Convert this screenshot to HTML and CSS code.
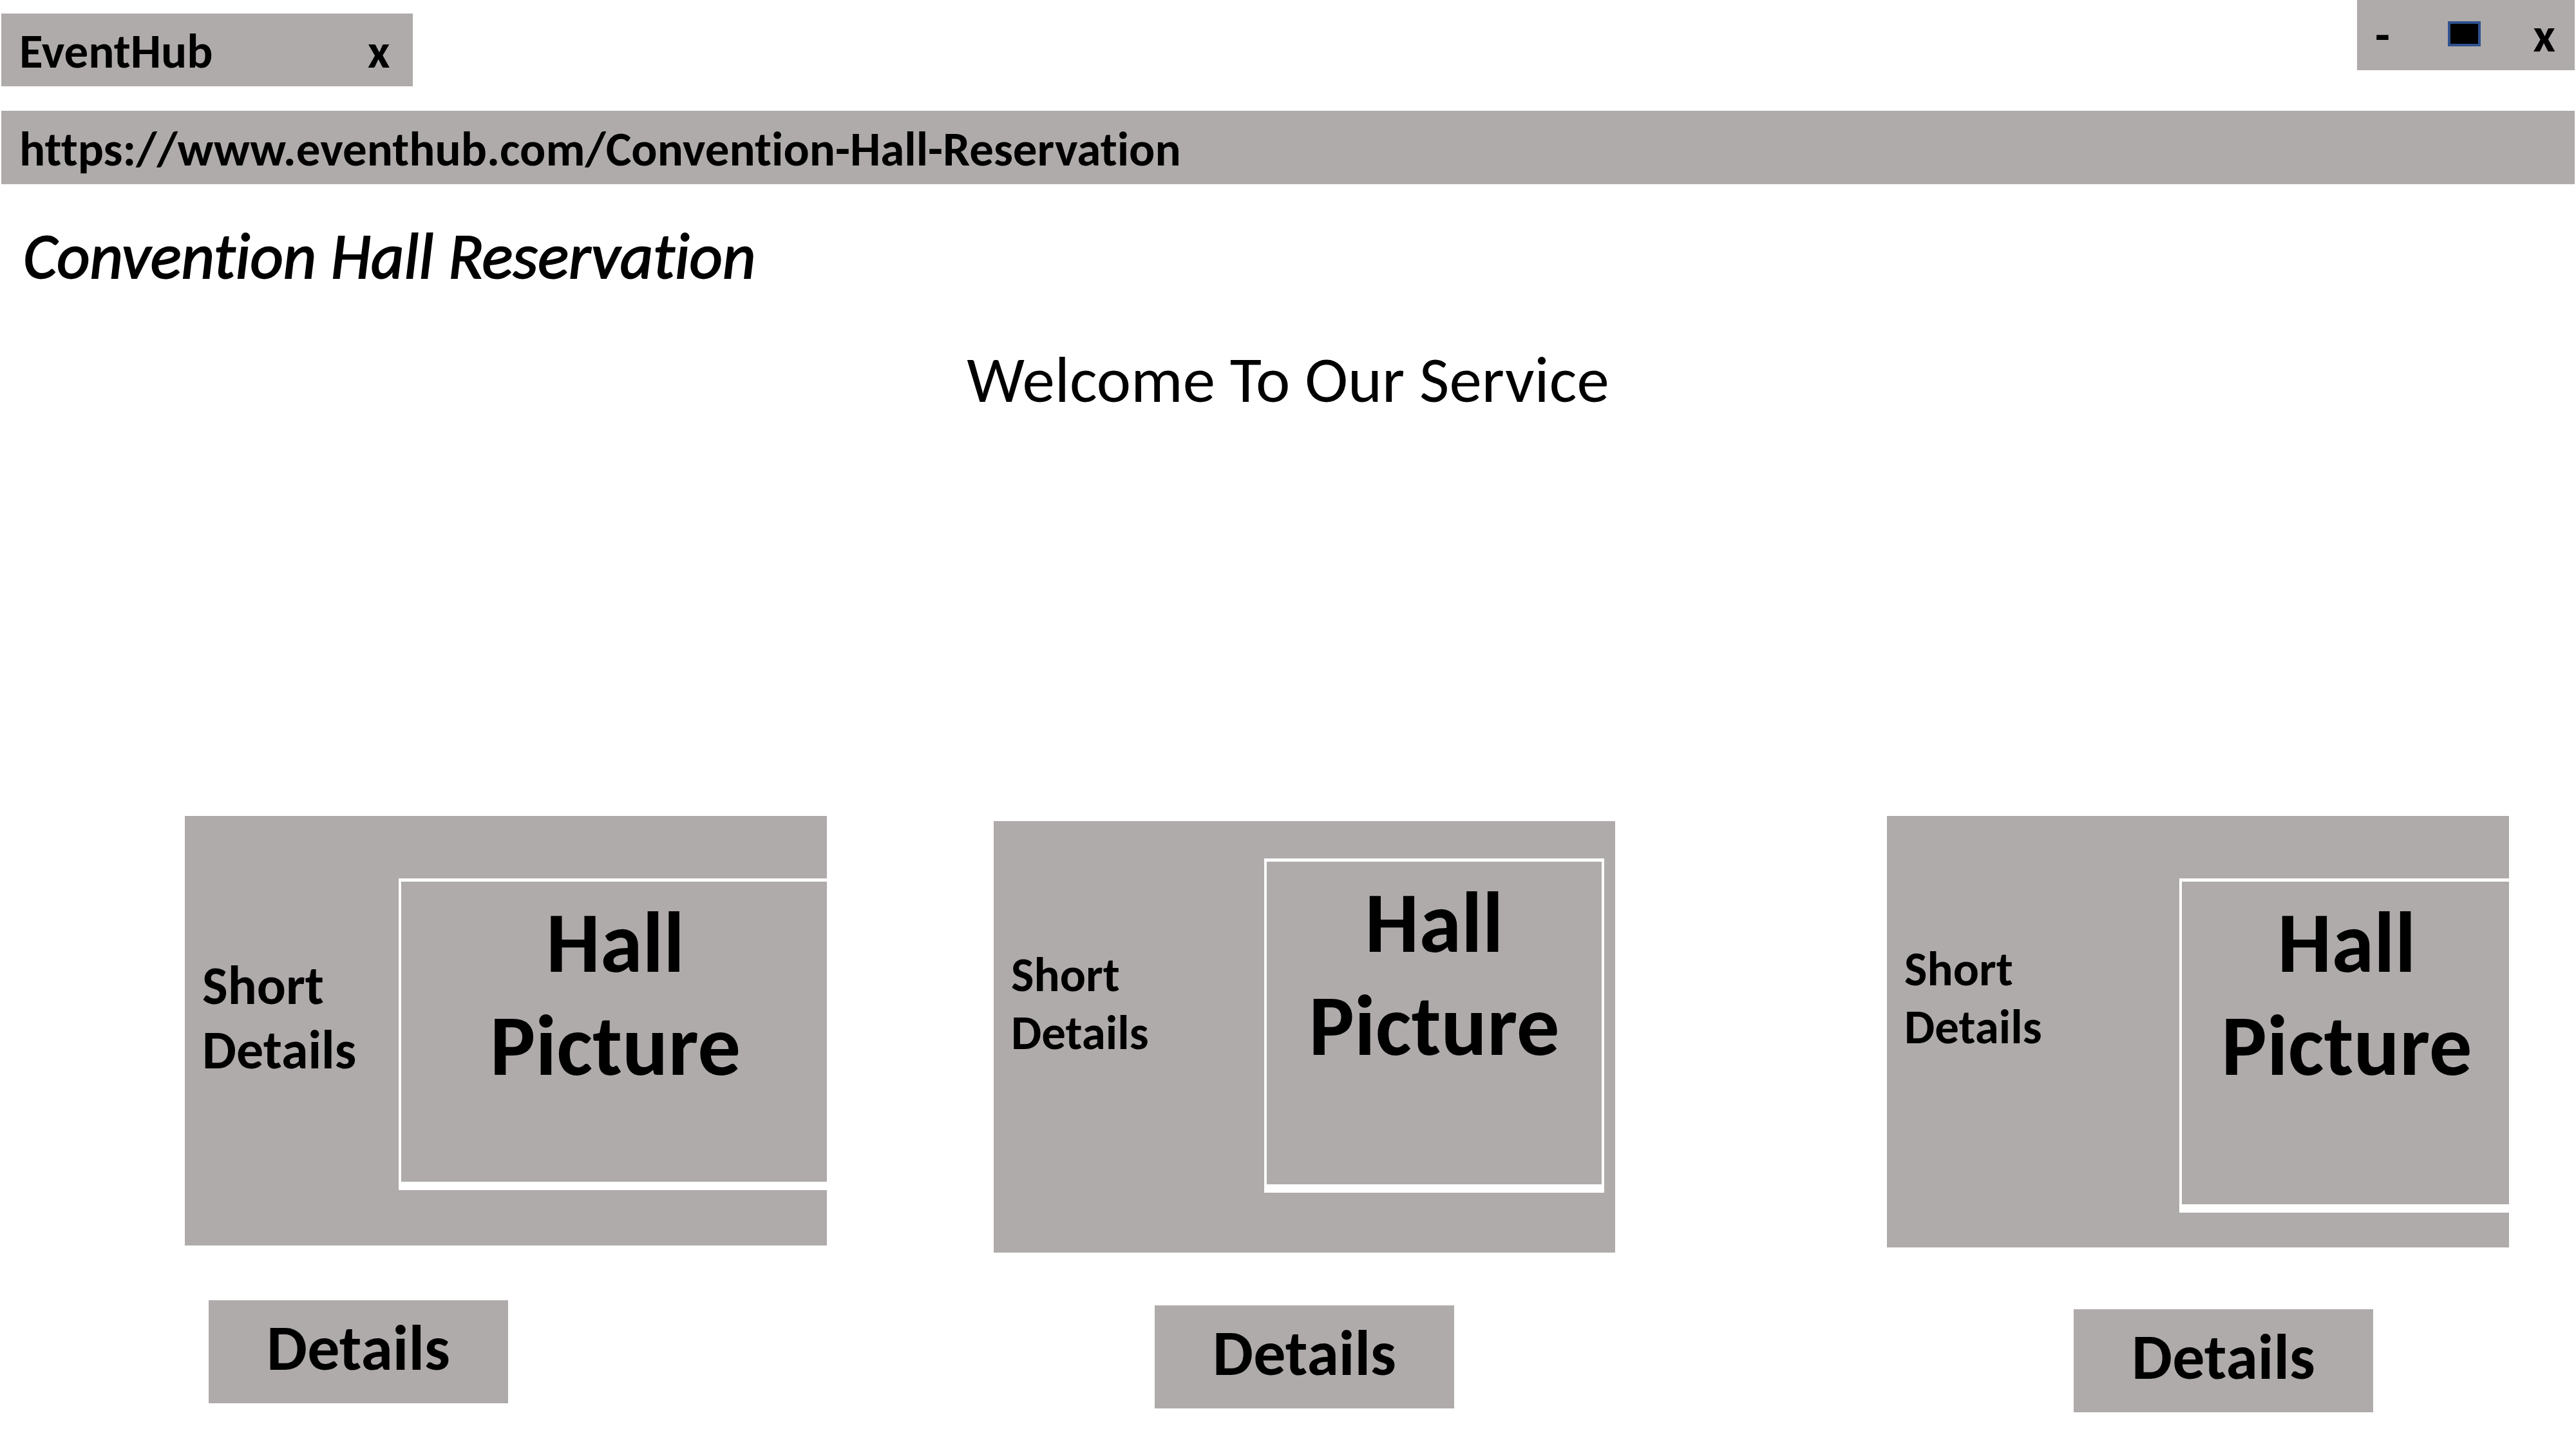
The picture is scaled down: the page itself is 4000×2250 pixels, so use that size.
FILE: index.html
```html
<!DOCTYPE html>
<html lang="en">
<head>
<meta charset="utf-8">
<title>EventHub</title>
<link rel="stylesheet" href="styles.css">
</head>
<body>
<header class="browser">
  <div class="browser-top">
    <div class="tab">
      <span class="tab-name">EventHub</span>
      <button class="plain-button" type="button" aria-label="Close tab">x</button>
    </div>
    <div class="window-controls">
      <button class="plain-button" type="button" aria-label="Minimize">-</button>
      <button class="maximize" type="button" aria-label="Maximize"></button>
      <button class="plain-button" type="button" aria-label="Close window">x</button>
    </div>
  </div>
  <input class="address" type="text" aria-label="Address" value="https://www.eventhub.com/Convention-Hall-Reservation">
</header>
<main>
  <h1 class="title">Convention Hall Reservation</h1>
  <p class="welcome">Welcome To Our Service</p>
  <div class="halls">
    <section class="hall hall-first">
      <div class="card">
        <p class="summary">Short Details</p>
        <div class="picture">Hall<br>Picture</div>
      </div>
      <button class="details" type="button">Details</button>
    </section>
    <section class="hall hall-second">
      <div class="card">
        <p class="summary">Short Details</p>
        <div class="picture">Hall<br>Picture</div>
      </div>
      <button class="details" type="button">Details</button>
    </section>
    <section class="hall hall-third">
      <div class="card">
        <p class="summary">Short Details</p>
        <div class="picture">Hall<br>Picture</div>
      </div>
      <button class="details" type="button">Details</button>
    </section>
  </div>
</main>
</body>
</html>
```
FILE: styles.css
```css
* {
  box-sizing: border-box;
}

body {
  margin: 0;
  background: #fff;
  color: #000;
  font-family: Carlito, Calibri, Lato, sans-serif;
  font-size: 75px;
  line-height: 90px;
  font-variant-ligatures: none;
}

h1,
p {
  margin: 0;
}

button,
input {
  margin: 0;
  padding: 0;
  border: 0;
  border-radius: 0;
  background: none;
  color: inherit;
  font: inherit;
  font-variant-ligatures: none;
}

.browser {
  padding: 0 2px;
  font-weight: 700;
}

.browser-top {
  display: flex;
  justify-content: space-between;
  align-items: flex-start;
  margin-bottom: 38px;
}

.tab {
  display: flex;
  justify-content: space-between;
  width: 16%;
  margin-top: 21px;
  padding: 14px 36px 9px 28px;
  background: #afabaa;
}

.window-controls {
  display: flex;
  justify-content: space-between;
  align-items: flex-start;
  width: 338px;
  padding: 10px 30px 9px 28px;
  background: #afabaa;
}

.maximize {
  width: 51px;
  height: 39px;
  margin: 23px 0 0 8px;
  border: 4px solid #2f528f;
  background: #000;
}

.address {
  display: block;
  width: 100%;
  height: 114px;
  padding: 14px 28px 10px;
  background: #afabaa;
}

.title {
  margin-top: 52px;
  padding-left: 36px;
  font-size: 100px;
  font-style: italic;
  font-weight: 400;
  line-height: 120px;
  -webkit-text-stroke: 2px #000;
}

.welcome {
  margin-top: 72px;
  font-size: 101px;
  line-height: 120px;
  text-align: center;
}

.halls {
  display: grid;
  grid-template-columns: 287fr 997fr 259fr 965fr 422fr 966fr 104fr;
  align-items: start;
  margin-top: 617px;
  padding-bottom: 56px;
  font-weight: 700;
}

.hall-first {
  grid-column: 2;
}

.hall-second {
  grid-column: 4;
  margin-top: 8px;
}

.hall-third {
  grid-column: 6;
}

.card {
  display: grid;
  align-items: start;
  background: #afabaa;
}

.hall-first .card {
  grid-template-columns: 332fr 665fr;
  padding: 97px 0 86px;
}

.hall-second .card {
  grid-template-columns: 420fr 528fr 17fr;
  padding: 58px 0 93px;
}

.hall-third .card {
  grid-template-columns: 454fr 512fr;
  padding: 97px 0 54px;
}

.summary {
  width: min-content;
  margin-left: 27px;
}

.hall-first .summary {
  margin-top: 117px;
  font-size: 84px;
  line-height: 100px;
}

.hall-second .summary {
  margin-top: 136px;
}

.hall-third .summary {
  margin-top: 96px;
}

.picture {
  min-height: 519px;
  padding: 15px 0 0 4px;
  border: 4px solid #fff;
  border-width: 5px 0 13px 4px;
  font-size: 133px;
  line-height: 160px;
  text-align: center;
}

.hall-first .picture {
  min-height: 484px;
}

.hall-second .picture {
  padding-left: 0;
  border-right-width: 4px;
}

.details {
  display: block;
  width: 465px;
  padding: 14px 0 26px;
  background: #afabaa;
  font-size: 100px;
  line-height: 120px;
  text-align: center;
}

.hall-first .details {
  margin: 85px 0 0 37px;
}

.hall-second .details {
  margin: 82px auto 0;
}

.hall-third .details {
  margin: 96px 0 0 290px;
}
```
